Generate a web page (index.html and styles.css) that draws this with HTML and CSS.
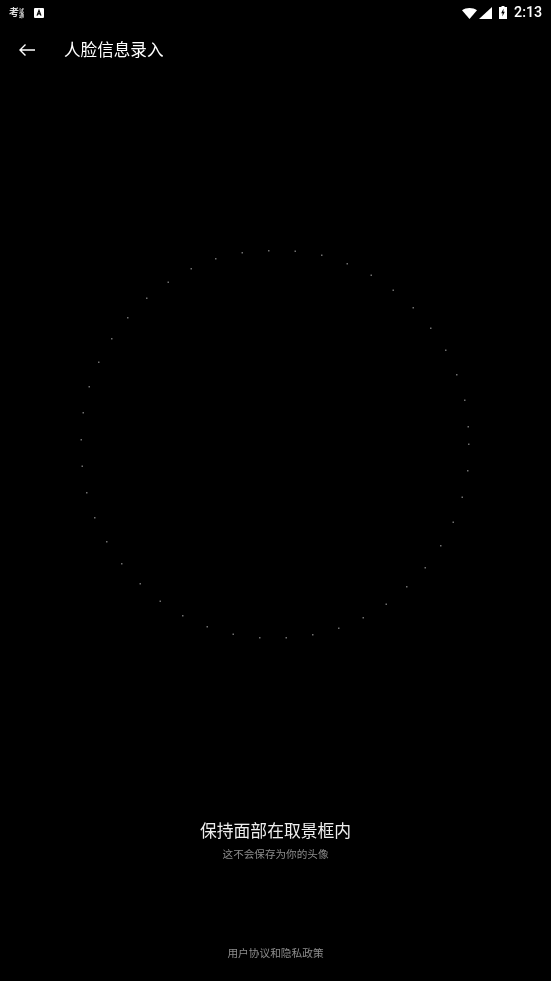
FILE: index.html
```html
<!DOCTYPE html>
<html lang="zh-CN">
<head>
<meta charset="utf-8">
<title>人脸信息录入</title>
<link rel="stylesheet" href="styles.css">
</head>
<body>
<div class="page">
  <div class="statusbar">
    <div class="status-left">
      <span class="app-mark">
        <span class="mark-big">考</span>
        <span class="mark-small">试<br>通</span>
      </span>
      <svg class="a-icon" width="10" height="10" viewBox="0 0 10 10">
        <rect width="10" height="10" rx="1" fill="#fff"/>
        <path d="M3 7.600 5 2.400 7 7.600M3.800 5.900H6.200" fill="none" stroke="#000" stroke-width="1.200"/>
      </svg>
    </div>
    <div class="status-right">
      <svg class="wifi" width="15" height="11" viewBox="0 0 15 11"><path d="M0 2.200C4.200-.7 10.800-.7 15 2.200L7.500 11Z" fill="#fff"/></svg>
      <svg class="signal" width="13" height="12" viewBox="0 0 13 12"><path d="M13 0V12H0Z" fill="#fff"/></svg>
      <svg class="battery" width="8" height="13" viewBox="0 0 8 13"><path d="M2.500 0H5.500V1H8V13H0V1H2.500Z" fill="#fff"/><path d="M4.600 2.600 2.200 7.200H3.700L3.300 10.600 5.800 5.800H4.300Z" fill="#000"/></svg>
      <span class="time">2:13</span>
    </div>
  </div>
  <header class="toolbar">
    <svg class="back" width="16" height="12" viewBox="0 0 16 12"><path d="M16 6H1M6.500 .5 1 6 6.500 11.500" fill="none" stroke="#fff" stroke-width="1.400"/></svg>
    <h1 class="title">人脸信息录入</h1>
  </header>
  <main class="stage">
    <svg class="ring" width="551" height="400" viewBox="0 240 551 400">
      <g class="dots">
        <rect x="268" y="250" width="1.500" height="1.500"/><rect x="241.500" y="252" width="1.500" height="1.500"/><rect x="215" y="258" width="1.500" height="1.500"/><rect x="190.500" y="268" width="1.500" height="1.500"/><rect x="167.500" y="281.500" width="1.500" height="1.500"/><rect x="146" y="297.500" width="1.500" height="1.500"/><rect x="127" y="317" width="1.500" height="1.500"/><rect x="111" y="338" width="1.500" height="1.500"/><rect x="98" y="361.500" width="1.500" height="1.500"/><rect x="88.500" y="386" width="1.500" height="1.500"/><rect x="82.500" y="412" width="1.500" height="1.500"/><rect x="80.500" y="439" width="1.500" height="1.500"/>
        <rect x="294.500" y="250.500" width="1.500" height="1.500"/><rect x="321" y="254.500" width="1.500" height="1.500"/><rect x="346.500" y="263" width="1.500" height="1.500"/><rect x="370.500" y="274.500" width="1.500" height="1.500"/><rect x="392.500" y="289.500" width="1.500" height="1.500"/><rect x="412.500" y="307" width="1.500" height="1.500"/><rect x="430" y="327.500" width="1.500" height="1.500"/><rect x="445" y="349.500" width="1.500" height="1.500"/><rect x="456" y="374" width="1.500" height="1.500"/><rect x="464" y="399.500" width="1.500" height="1.500"/><rect x="467.500" y="426" width="1.500" height="1.500"/><rect x="468" y="443.500" width="1.500" height="1.500"/>
        <rect x="81.500" y="465.500" width="1.500" height="1.500"/><rect x="86" y="492" width="1.500" height="1.500"/><rect x="94" y="517" width="1.500" height="1.500"/><rect x="106" y="541" width="1.500" height="1.500"/><rect x="121" y="563" width="1.500" height="1.500"/><rect x="139.500" y="583" width="1.500" height="1.500"/><rect x="159.500" y="600.500" width="1.500" height="1.500"/><rect x="182" y="615" width="1.500" height="1.500"/><rect x="206.500" y="626" width="1.500" height="1.500"/><rect x="232.500" y="633.500" width="1.500" height="1.500"/><rect x="259" y="637" width="1.500" height="1.500"/>
        <rect x="467" y="470" width="1.500" height="1.500"/><rect x="461.500" y="496.500" width="1.500" height="1.500"/><rect x="452.500" y="521.500" width="1.500" height="1.500"/><rect x="440" y="545" width="1.500" height="1.500"/><rect x="424.500" y="567" width="1.500" height="1.500"/><rect x="406" y="586" width="1.500" height="1.500"/><rect x="385.500" y="603.500" width="1.500" height="1.500"/><rect x="362.500" y="617" width="1.500" height="1.500"/><rect x="338" y="627.500" width="1.500" height="1.500"/><rect x="312" y="634" width="1.500" height="1.500"/><rect x="285.500" y="637" width="1.500" height="1.500"/>
      </g>
    </svg>
    <div class="prompt">
      <p class="prompt-main">保持面部在取景框内</p>
      <p class="prompt-sub">这不会保存为你的头像</p>
    </div>
  </main>
  <footer class="policy">用户协议和隐私政策</footer>
</div>
</body>
</html>
```
FILE: styles.css
```css
* { box-sizing: border-box; }
html, body { margin: 0; height: 100%; background: #000; }
body { font-family: Roboto, "Noto Sans CJK SC", sans-serif; color: #fff; overflow: hidden; }
.page { width: 551px; height: 981px; display: flex; flex-direction: column; background: #000; }
.statusbar { height: 25px; flex: none; display: flex; justify-content: space-between; align-items: center; padding: 0 9px; }
.status-left { display: flex; align-items: center; gap: 9px; }
.app-mark { display: flex; align-items: center; width: 15px; height: 15px; overflow: hidden; color: #ddd; will-change: transform; }
.mark-big { font-size: 10px; line-height: 13px; font-weight: 700; flex: none; }
.mark-small { font-size: 5px; line-height: 5px; font-weight: 700; flex: none; }
.a-icon { margin: 1px 0 0 1px; }
.status-right { display: flex; align-items: center; gap: 2px; }
.wifi { margin-top: 1px; }
.battery { margin-left: 5px; }
.time { font-size: 14.300px; font-weight: 500; margin-left: 5px; line-height: 25px; will-change: transform; }
.toolbar { height: 50px; flex: none; display: flex; align-items: center; padding-left: 19px; }
.title { margin: 2px 0 0 29px; font-size: 16.600px; font-weight: 400; line-height: 50px; color: #fff; will-change: transform; }
.stage { flex: 1; display: flex; flex-direction: column; align-items: center; padding-top: 165px; }
.ring { display: block; flex: none; }
.dots rect { fill: #707070; }
.prompt { margin-top: 180px; text-align: center; will-change: transform; }
.prompt-main { margin: 0; font-size: 16.800px; line-height: 22px; color: #eee; }
.prompt-sub { margin: 6px 0 0; font-size: 10.600px; line-height: 14px; color: #8c8c8c; }
.policy { flex: none; height: 35px; text-align: center; font-size: 10.700px; line-height: 16px; color: #8c8c8c; will-change: transform; }
```
